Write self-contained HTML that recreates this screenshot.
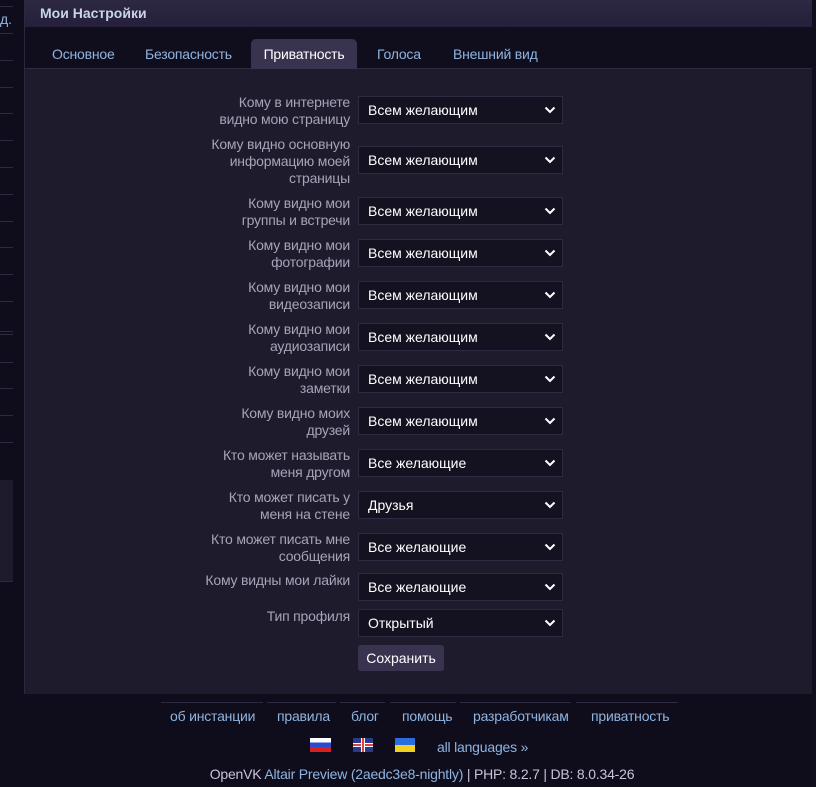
<!DOCTYPE html>
<html><head><meta charset="utf-8"><style>
*{box-sizing:border-box;margin:0;padding:0}
body{width:816px;height:787px;background:#0f0d1c;font-family:"Liberation Sans",sans-serif;font-size:13px;color:#c8c4d8;position:relative;overflow:hidden}
.sl{position:absolute;left:0;width:13px;height:1px;background:#2e2a40}
.main{position:absolute;left:24px;top:0;width:788px;height:694px;border-left:1px solid #2c2840;background:#1e1b2d}
.hdr{height:27px;background:linear-gradient(#2d2843,#252039);color:#c8d4ee;font-weight:bold;font-size:14px;padding:5px 0 0 15px}
.tabs{height:42px;background:#100e1d;border-bottom:1px solid #2e2a42;position:relative}
.tab{position:absolute;top:19px;color:#8fb4e0;font-size:14px;letter-spacing:-0.2px}
.tab.act{top:12px;left:226px;width:106px;height:30px;background:#3a3350;border-radius:5px 5px 0 0;color:#fff;padding-top:7px;text-align:center}
.lbl{position:absolute;right:466px;text-align:right;color:#a7a3b8;font-size:14px;line-height:17px;letter-spacing:-0.2px}
.sel{position:absolute;left:358px;width:205px;height:28px;background:#141221;border:1px solid #2e2a42;color:#fff;font-size:14px;padding:5px 0 0 9px}
.sel svg{position:absolute;right:6px;top:9px}
.btn{position:absolute;left:358px;top:645px;width:86px;height:26px;background:#3a3350;border-radius:3px;color:#fff;font-size:14px;text-align:center;padding-top:5px}
.fl{position:absolute;top:702px;height:1px;background:#2e2a42}
.fk{position:absolute;top:708px;color:#8fb4e0;font-size:14px;letter-spacing:-0.2px}
</style></head><body>
<div style="position:absolute;left:0;top:11px;color:#8fb4e0;font-size:14px">д.</div>
<div class="sl" style="top:6px"></div><div class="sl" style="top:33px"></div><div class="sl" style="top:60px"></div><div class="sl" style="top:87px"></div><div class="sl" style="top:113px"></div><div class="sl" style="top:140px"></div><div class="sl" style="top:167px"></div><div class="sl" style="top:194px"></div><div class="sl" style="top:221px"></div><div class="sl" style="top:247px"></div><div class="sl" style="top:274px"></div><div class="sl" style="top:301px"></div><div class="sl" style="top:331px"></div><div class="sl" style="top:334px"></div><div class="sl" style="top:362px"></div><div class="sl" style="top:388px"></div><div class="sl" style="top:415px"></div><div class="sl" style="top:442px"></div>
<div style="position:absolute;left:0;top:480px;width:13px;height:102px;background:#1e1b2d;border-bottom:1px solid #2e2a40"></div>
<div style="position:absolute;left:811px;top:0;width:5px;height:787px;background:#100e1d"></div>
<div class="main">
<div class="hdr">Мои Настройки</div>
<div class="tabs">
<span class="tab" style="left:27px">Основное</span>
<span class="tab" style="left:120px">Безопасность</span>
<div class="tab act">Приватность</div>
<span class="tab" style="left:352px">Голоса</span>
<span class="tab" style="left:428px">Внешний вид</span>
</div>
</div>
<div class="lbl" style="top:94px">Кому в интернете<br>видно мою страницу</div><div class="sel" style="top:96px">Всем желающим<svg width="12" height="8" viewBox="0 0 12 8"><path d="M1.5 1.5 6 6 10.5 1.5" stroke="#fff" stroke-width="2" fill="none"/></svg></div>
<div class="lbl" style="top:136px">Кому видно основную<br>информацию моей<br>страницы</div><div class="sel" style="top:146px">Всем желающим<svg width="12" height="8" viewBox="0 0 12 8"><path d="M1.5 1.5 6 6 10.5 1.5" stroke="#fff" stroke-width="2" fill="none"/></svg></div>
<div class="lbl" style="top:195px">Кому видно мои<br>группы и встречи</div><div class="sel" style="top:197px">Всем желающим<svg width="12" height="8" viewBox="0 0 12 8"><path d="M1.5 1.5 6 6 10.5 1.5" stroke="#fff" stroke-width="2" fill="none"/></svg></div>
<div class="lbl" style="top:237px">Кому видно мои<br>фотографии</div><div class="sel" style="top:239px">Всем желающим<svg width="12" height="8" viewBox="0 0 12 8"><path d="M1.5 1.5 6 6 10.5 1.5" stroke="#fff" stroke-width="2" fill="none"/></svg></div>
<div class="lbl" style="top:279px">Кому видно мои<br>видеозаписи</div><div class="sel" style="top:281px">Всем желающим<svg width="12" height="8" viewBox="0 0 12 8"><path d="M1.5 1.5 6 6 10.5 1.5" stroke="#fff" stroke-width="2" fill="none"/></svg></div>
<div class="lbl" style="top:321px">Кому видно мои<br>аудиозаписи</div><div class="sel" style="top:323px">Всем желающим<svg width="12" height="8" viewBox="0 0 12 8"><path d="M1.5 1.5 6 6 10.5 1.5" stroke="#fff" stroke-width="2" fill="none"/></svg></div>
<div class="lbl" style="top:363px">Кому видно мои<br>заметки</div><div class="sel" style="top:365px">Всем желающим<svg width="12" height="8" viewBox="0 0 12 8"><path d="M1.5 1.5 6 6 10.5 1.5" stroke="#fff" stroke-width="2" fill="none"/></svg></div>
<div class="lbl" style="top:405px">Кому видно моих<br>друзей</div><div class="sel" style="top:407px">Всем желающим<svg width="12" height="8" viewBox="0 0 12 8"><path d="M1.5 1.5 6 6 10.5 1.5" stroke="#fff" stroke-width="2" fill="none"/></svg></div>
<div class="lbl" style="top:447px">Кто может называть<br>меня другом</div><div class="sel" style="top:449px">Все желающие<svg width="12" height="8" viewBox="0 0 12 8"><path d="M1.5 1.5 6 6 10.5 1.5" stroke="#fff" stroke-width="2" fill="none"/></svg></div>
<div class="lbl" style="top:489px">Кто может писать у<br>меня на стене</div><div class="sel" style="top:491px">Друзья<svg width="12" height="8" viewBox="0 0 12 8"><path d="M1.5 1.5 6 6 10.5 1.5" stroke="#fff" stroke-width="2" fill="none"/></svg></div>
<div class="lbl" style="top:531px">Кто может писать мне<br>сообщения</div><div class="sel" style="top:533px">Все желающие<svg width="12" height="8" viewBox="0 0 12 8"><path d="M1.5 1.5 6 6 10.5 1.5" stroke="#fff" stroke-width="2" fill="none"/></svg></div>
<div class="lbl" style="top:572px">Кому видны мои лайки</div><div class="sel" style="top:573px">Все желающие<svg width="12" height="8" viewBox="0 0 12 8"><path d="M1.5 1.5 6 6 10.5 1.5" stroke="#fff" stroke-width="2" fill="none"/></svg></div>
<div class="lbl" style="top:608px">Тип профиля</div><div class="sel" style="top:609px">Открытый<svg width="12" height="8" viewBox="0 0 12 8"><path d="M1.5 1.5 6 6 10.5 1.5" stroke="#fff" stroke-width="2" fill="none"/></svg></div>
<div class="btn">Сохранить</div>
<div class="fl" style="left:161px;width:102px"></div><div class="fl" style="left:267px;width:69px"></div><div class="fl" style="left:340px;width:45px"></div><div class="fl" style="left:390px;width:66px"></div><div class="fl" style="left:460px;width:111px"></div><div class="fl" style="left:576px;width:102px"></div>
<span class="fk" style="left:170px">об инстанции</span><span class="fk" style="left:277px">правила</span><span class="fk" style="left:351px">блог</span><span class="fk" style="left:402px">помощь</span><span class="fk" style="left:473px">разработчикам</span><span class="fk" style="left:591px">приватность</span>
<div style="position:absolute;left:310px;top:738px;width:21px;height:14px;background:linear-gradient(#fff 33%,#2a4bd0 33%,#2a4bd0 66%,#d82020 66%)"></div>
<div style="position:absolute;left:353px;top:738px;width:20px;height:14px;background:#2a3a8a;overflow:hidden"><div style="position:absolute;left:0;top:5px;width:20px;height:4px;background:#e04040;border-top:1px solid #fff;border-bottom:1px solid #fff"></div><div style="position:absolute;left:8px;top:0;width:4px;height:14px;background:#e04040;border-left:1px solid #fff;border-right:1px solid #fff"></div></div>
<div style="position:absolute;left:395px;top:738px;width:20px;height:14px;background:linear-gradient(#2a6de0 50%,#f0d020 50%)"></div>
<span style="position:absolute;left:437px;top:739px;color:#8fb4e0;font-size:14px;letter-spacing:-0.2px">all languages »</span>
<div style="position:absolute;left:0;width:816px;top:766px;text-align:center;color:#c8c4d8;font-size:14px;letter-spacing:-0.2px;padding-left:28px">OpenVK <span style="color:#8fb4e0">Altair Preview (2aedc3e8-nightly)</span> | PHP: 8.2.7 | DB: 8.0.34-26</div>
</body></html>
